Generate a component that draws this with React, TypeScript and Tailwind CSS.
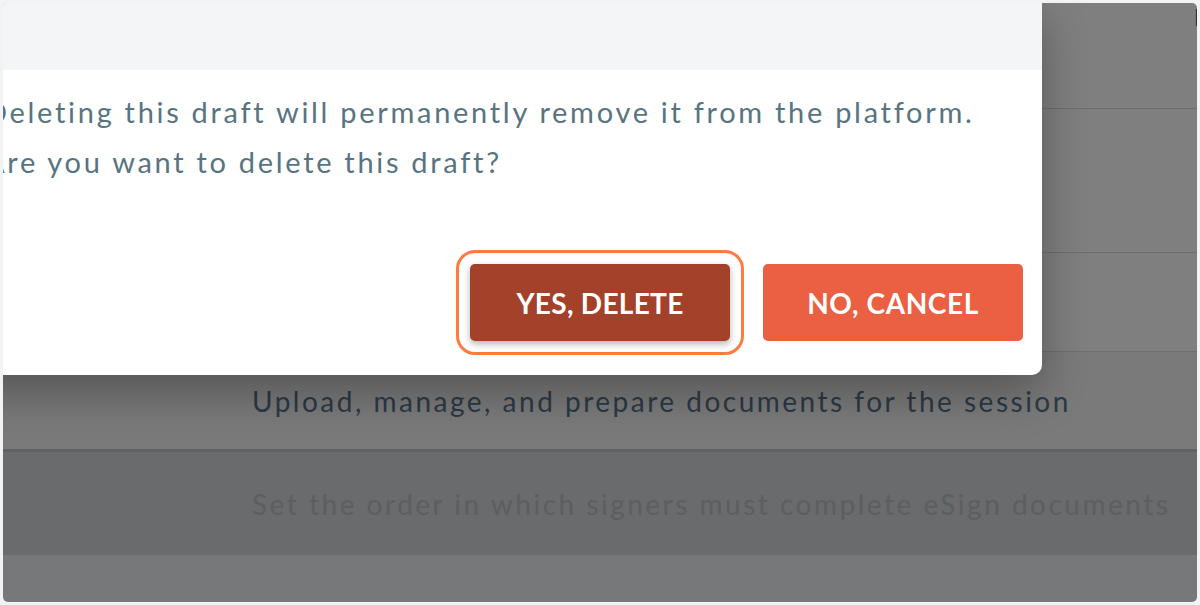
import React from 'react';

const font = { fontFamily: 'Lato, "Open Sans", sans-serif' };

function PageRows() {
    return (
        <div className="flex h-full flex-col" style={font}>
            <div className="flex h-[106px] justify-end border-b border-[#6d6d6d] bg-[#7f7f7f]">
                <span className="mr-[-15px] mt-[1px] text-[24px] leading-[26px] text-[#1c2c3e]">N</span>
            </div>
            <div className="h-[144px] border-b border-[#6d6d6d] bg-[#7f7f7f]" />
            <div className="h-[99px] border-b border-[#6d6d6d] bg-[#7f7f7f]" />
            <div className="flex h-[100px] items-center border-b-[3px] border-[#616262] bg-[#7a7a7a] pl-[249px] text-[28px] tracking-[2.5px] text-[#2c3946]">
                Upload, manage, and prepare documents for the session
            </div>
            <div className="flex h-[103px] items-center bg-[#6a6b6c] pl-[249px] text-[28px] tracking-[2.5px] text-[#5a5f61]">
                Set the order in which signers must complete eSign documents
            </div>
            <div className="flex-1 bg-[#77787a]" />
        </div>
    );
}

function DeleteDraftModal() {
    return (
        <div
            className="absolute left-[-47px] top-[-3px] w-[1086px] rounded-br-[10px] bg-white shadow-[0_18px_45px_rgba(0,0,0,0.3)]"
            style={font}
        >
            <div className="h-[70px] bg-[#f4f5f7]" />
            <div className="pl-[29px] pr-[19px] pt-[17px] pb-[34px]">
                <p className="whitespace-nowrap text-[29px] leading-[50px] tracking-[2.7px] text-[#587482]">
                    Deleting this draft will permanently remove it from the platform.
                    <br />
                    Are you want to delete this draft?
                </p>
                <div className="mt-[77px] flex justify-end gap-[33px]">
                    <button className="h-[77px] w-[260px] rounded-[5px] bg-[#a3412b] text-[28px] font-bold tracking-[0.3px] text-white shadow-[0_3px_7px_rgba(0,0,0,0.3)] outline-[3px] outline-offset-[11px] outline-[#ff7b3e]">
                        YES, DELETE
                    </button>
                    <button className="h-[77px] w-[260px] rounded-[5px] bg-[#eb5f42] text-[28px] font-bold tracking-[0.6px] text-white">
                        NO, CANCEL
                    </button>
                </div>
            </div>
        </div>
    );
}

export default function App() {
    return (
        <div className="h-[605px] w-[1200px] bg-[#f3f2f5] p-[3px]">
            <div className="relative h-full w-full overflow-hidden rounded-[5px]">
                <PageRows />
                <DeleteDraftModal />
            </div>
        </div>
    );
}
